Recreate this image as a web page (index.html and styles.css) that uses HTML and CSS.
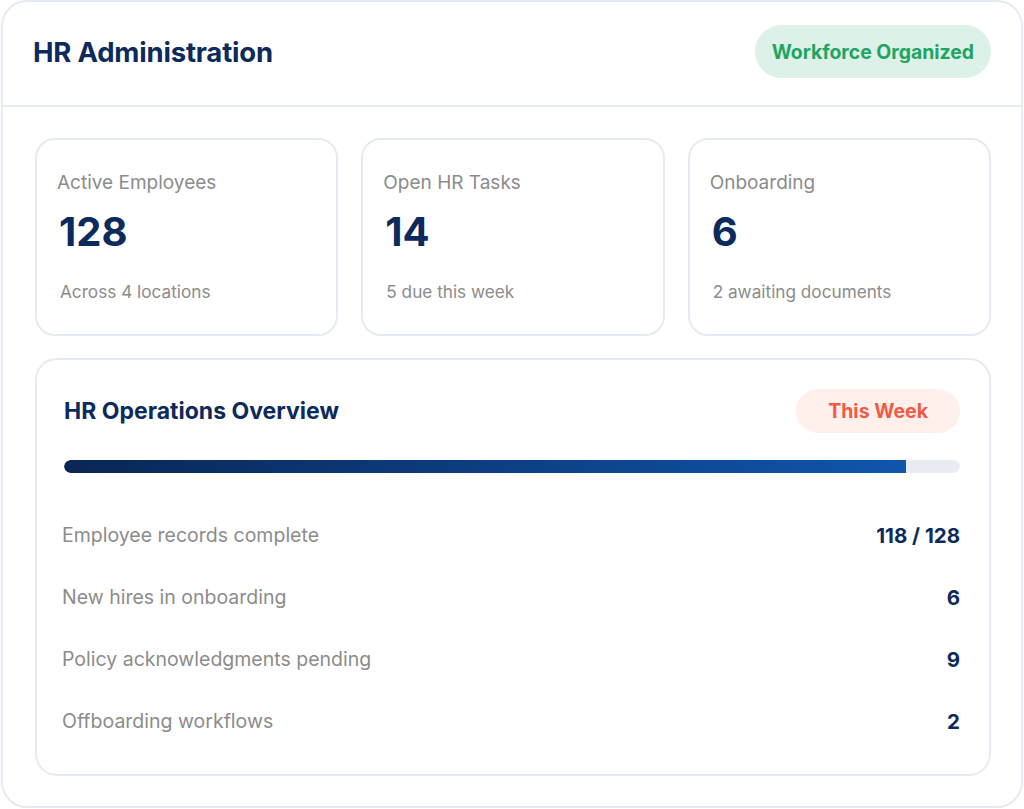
FILE: index.html
```html
<!DOCTYPE html>
<html lang="en">
<head>
  <meta charset="UTF-8">
  <meta name="viewport" content="width=device-width, initial-scale=1.0">
  <title>HR Administration</title>
  <link rel="stylesheet" href="styles.css">
</head>
<body>

  <div class="panel">
    <div class="panel-header">
      <h1>HR Administration</h1>
      <span class="badge badge-green">Workforce Organized</span>
    </div>

    <div class="panel-body">
      <div class="stats">
        <div class="stat">
          <div class="stat-label">Active Employees</div>
          <div class="stat-value">128</div>
          <div class="stat-note">Across 4 locations</div>
        </div>
        <div class="stat">
          <div class="stat-label">Open HR Tasks</div>
          <div class="stat-value">14</div>
          <div class="stat-note">5 due this week</div>
        </div>
        <div class="stat">
          <div class="stat-label">Onboarding</div>
          <div class="stat-value">6</div>
          <div class="stat-note">2 awaiting documents</div>
        </div>
      </div>

      <div class="overview">
        <div class="overview-head">
          <h2>HR Operations Overview</h2>
          <span class="badge badge-red">This Week</span>
        </div>
        <div class="progress">
          <div class="progress-fill" style="width: 94%"></div>
        </div>
        <div class="rows">
          <div class="row"><span>Employee records complete</span><strong>118 / 128</strong></div>
          <div class="row"><span>New hires in onboarding</span><strong>6</strong></div>
          <div class="row"><span>Policy acknowledgments pending</span><strong>9</strong></div>
          <div class="row"><span>Offboarding workflows</span><strong>2</strong></div>
        </div>
      </div>
    </div>
  </div>

</body>
</html>
```

FILE: styles.css
```css
body {
  margin: 0;
  padding: 0 1px 1px 1px;
  font-family: Inter, "Noto Sans", sans-serif;
  background: #fff;
}
.panel {
  width: 1022px;
  height: 808px;
  box-sizing: border-box;
  border: 2px solid #e6eaf2;
  border-radius: 26px;
  background: #fff;
}
.panel-header {
  height: 105px;
  box-sizing: border-box;
  border-bottom: 2px solid #e6eaf2;
  display: flex;
  align-items: center;
  justify-content: space-between;
  padding: 0 30px 4px 30px;
}
h1 {
  margin: 0;
  font-size: 27.5px;
  font-weight: 700;
  color: #0c2a5b;
  letter-spacing: -0.2px;
}
.badge {
  display: inline-flex;
  align-items: center;
  justify-content: center;
  border-radius: 999px;
  font-weight: 700;
}
.badge-green {
  height: 53px;
  padding: 0 17px;
  font-size: 19.4px;
  background: #dcf1e7;
  color: #1fa463;
}
.badge-red {
  height: 44px;
  padding: 0 32px;
  font-size: 19.5px;
  background: #fff0ec;
  color: #f25a44;
}
.panel-body {
  padding: 31px 30px 0 32px;
}
.stats {
  display: grid;
  grid-template-columns: repeat(3, 1fr);
  gap: 23px;
}
.stat {
  height: 198px;
  box-sizing: border-box;
  border: 2px solid #e6eaf2;
  border-radius: 20px;
  padding: 32px 20px 0 20px;
}
.stat-label {
  font-size: 19px;
  line-height: 22px;
  color: #8c8c8c;
}
.stat-value {
  margin-top: 15px;
  padding-left: 2px;
  font-size: 40px;
  line-height: 46px;
  font-weight: 700;
  color: #0c2a5b;
}
.stat-note {
  margin-top: 26px;
  font-size: 17.2px;
  line-height: 22px;
  color: #8c8c8c;
  padding-left: 3px;
}
.overview {
  margin-top: 22px;
  height: 418px;
  box-sizing: border-box;
  border: 2px solid #e6eaf2;
  border-radius: 22px;
  padding: 29px 29px 0 25px;
}
.overview-head {
  display: flex;
  align-items: center;
  justify-content: space-between;
  padding-left: 2px;
}
h2 {
  margin: 0;
  font-size: 23px;
  font-weight: 700;
  color: #0c2a5b;
}
.progress {
  margin-top: 27px;
  margin-left: 2px;
  height: 13px;
  border-radius: 7px;
  background: #e9edf3;
  overflow: hidden;
}
.progress-fill {
  height: 100%;
  border-radius: 7px 0 0 7px;
  background: linear-gradient(90deg, #0a2655, #0f56ad);
}
.rows {
  margin-top: 31px;
}
.row {
  height: 62px;
  display: flex;
  align-items: center;
  justify-content: space-between;
  font-size: 19.5px;
}
.row span {
  color: #8c8c8c;
}
.row strong {
  color: #0c2a5b;
  font-weight: 700;
  font-size: 20.5px;
}
```
